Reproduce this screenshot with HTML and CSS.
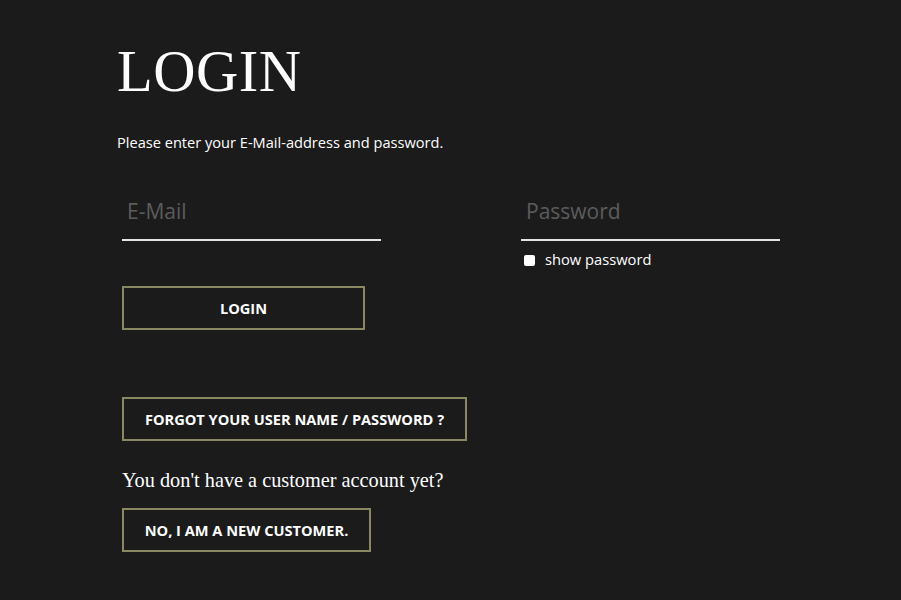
FILE: index.html
```html
<!DOCTYPE html>
<html>
<head>
<meta charset="utf-8">
<link rel="stylesheet" href="styles.css">
</head>
<body>
<main class="page">
  <h1 class="title">LOGIN</h1>
  <p class="intro">Please enter your E-Mail-address and password.</p>
  <form class="form">
    <div class="fields">
      <div class="field">
        <input class="input" type="text" placeholder="E-Mail">
      </div>
      <div class="field">
        <input class="input" type="password" placeholder="Password">
        <label class="show"><span class="box"></span>show password</label>
      </div>
    </div>
    <button class="btn btn-login" type="button">LOGIN</button>
    <button class="btn btn-forgot" type="button">FORGOT YOUR USER NAME / PASSWORD ?</button>
    <p class="question">You don't have a customer account yet?</p>
    <button class="btn btn-new" type="button">NO, I AM A NEW CUSTOMER.</button>
  </form>
</main>
</body>
</html>
```

FILE: styles.css
```css
html, body {
  margin: 0;
  padding: 0;
  background: #1b1b1b;
}
body {
  font-family: "Open Sans", "Liberation Sans", sans-serif;
  color: #ffffff;
  height: 600px;
  overflow: hidden;
}
.page {
  padding: 44px 0 0 117px;
}
.title {
  margin: 0;
  font-family: "Liberation Serif", serif;
  font-weight: normal;
  font-size: 58.5px;
  line-height: 56px;
  letter-spacing: 0.5px;
}
.intro {
  margin: 32px 0 0 0;
  font-size: 14.6px;
  line-height: 20px;
}
.form {
  margin: 0 0 0 5px;
  display: flex;
  flex-direction: column;
  align-items: flex-start;
}
.fields {
  display: grid;
  grid-template-columns: 259px 259px;
  column-gap: 140px;
  margin-top: 39px;
}
.field {
  display: flex;
  flex-direction: column;
}
.input {
  width: 259px;
  box-sizing: border-box;
  height: 50px;
  background: transparent;
  border: none;
  border-bottom: 2px solid #e4e4e4;
  padding: 0 5px 8px;
  font-family: "Open Sans", sans-serif;
  font-size: 21px;
  color: #fff;
  outline: none;
}
.input::placeholder {
  color: #5c5c5c;
}
.show {
  display: flex;
  align-items: center;
  gap: 10px;
  margin: 9px 0 0 3px;
  font-size: 14.7px;
  line-height: 18px;
}
.box {
  width: 11px;
  height: 11px;
  background: #fff;
  border-radius: 2px;
  margin-top: 2px;
}
.btn {
  height: 44px;
  box-sizing: border-box;
  background: transparent;
  border: 2px solid #8a8860;
  color: #fff;
  font-family: "Open Sans", sans-serif;
  font-weight: bold;
  font-size: 14.6px;
  padding: 0 20px;
}
.btn-login {
  width: 243px;
  margin-top: 18px;
}
.btn-forgot {
  width: 345px;
  margin-top: 67px;
}
.question {
  margin: 25px 0 0 0;
  font-family: "Liberation Serif", serif;
  font-size: 20.3px;
  line-height: 28px;
}
.btn-new {
  width: 249px;
  margin-top: 14px;
}
```
